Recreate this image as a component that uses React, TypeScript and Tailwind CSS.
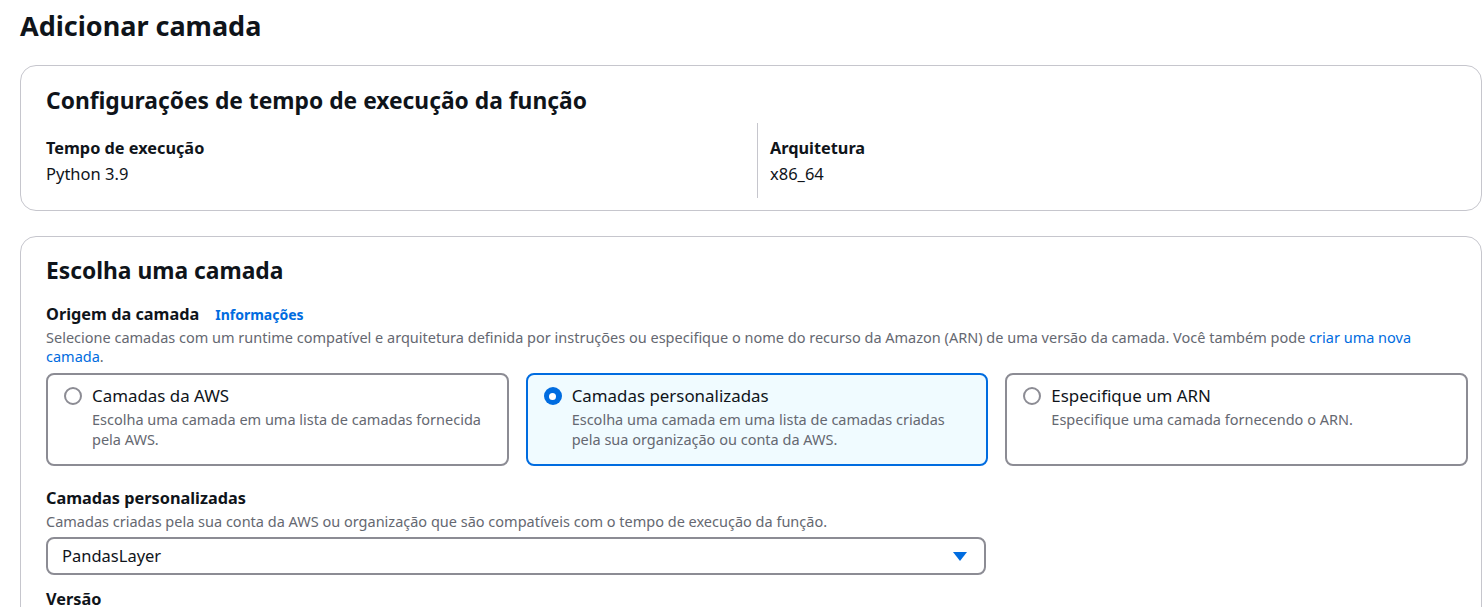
import React from 'react'

const font = { fontFamily: '"Noto Sans", "Open Sans", Arial, sans-serif' }

type Tile = { title: string; desc: string; selected?: boolean }

const TILES: Tile[] = [
  { title: 'Camadas da AWS', desc: 'Escolha uma camada em uma lista de camadas fornecida pela AWS.' },
  { title: 'Camadas personalizadas', desc: 'Escolha uma camada em uma lista de camadas criadas pela sua organização ou conta da AWS.', selected: true },
  { title: 'Especifique um ARN', desc: 'Especifique uma camada fornecendo o ARN.' },
]

function Radio({ checked }: { checked?: boolean }) {
  return checked ? (
    <span className="mt-[2px] flex h-[18px] w-[18px] shrink-0 items-center justify-center rounded-full bg-[#006ce0]">
      <span className="h-[7px] w-[7px] rounded-full bg-white" />
    </span>
  ) : (
    <span className="mt-[2px] h-[18px] w-[18px] shrink-0 rounded-full border-2 border-[#8c8c94] bg-white" />
  )
}

export default function App() {
  return (
    <div className="min-h-screen overflow-hidden bg-white pl-5 text-[#0f141a]" style={font}>
      <h1 className="pt-[8px] text-[27px] font-bold leading-[36px]">Adicionar camada</h1>

      {/* Runtime settings */}
      <section className="mt-[21px] w-[1462px] rounded-[16px] border border-[#c6c6cd] px-[25px] pb-[12px] pt-[21px]">
        <h2 className="text-[22.8px] font-bold leading-[28px]">Configurações de tempo de execução da função</h2>
        <div className="mt-[8px] grid grid-cols-[711px_1fr]">
          <div className="pb-[12px] pt-[13px]">
            <p className="text-[16.3px] font-bold leading-[25px]">Tempo de execução</p>
            <p className="text-[16.5px] leading-[25px]">Python 3.9</p>
          </div>
          <div className="border-l border-[#c6c6cd] pb-[12px] pl-[12px] pt-[13px]">
            <p className="text-[16.3px] font-bold leading-[25px]">Arquitetura</p>
            <p className="text-[16.5px] leading-[25px]">x86_64</p>
          </div>
        </div>
      </section>

      {/* Choose layer */}
      <section className="mt-[25px] w-[1462px] rounded-[16px] border border-[#c6c6cd] px-[25px] pb-10 pt-[20px]">
        <h2 className="text-[22.8px] font-bold leading-[28px]">Escolha uma camada</h2>

        <div className="mt-[17px] flex items-baseline gap-[16px]">
          <span className="text-[16.3px] font-bold leading-[24px]">Origem da camada</span>
          <span className="text-[14px] font-bold text-[#006ce0]">Informações</span>
        </div>
        <p className="mt-[2px] w-[1385px] text-[14.5px] leading-[19px] text-[#656871]">
          Selecione camadas com um runtime compatível e arquitetura definida por instruções ou especifique o nome do recurso da Amazon (ARN) de uma versão da camada. Você também pode{' '}
          <span className="text-[#006ce0]">criar uma nova camada</span>.
        </p>

        <div className="mt-[7px] grid w-[1422px] grid-cols-3 gap-[17px]">
          {TILES.map(t => (
            <div
              key={t.title}
              className={
                t.selected
                  ? 'flex h-[93px] gap-[10px] rounded-[8px] border-2 border-[#006ce0] bg-[#f0fbff] pl-[16px] pr-[20px] pt-[10px]'
                  : 'flex h-[93px] gap-[10px] rounded-[8px] border-2 border-[#8c8c94] bg-white pl-[16px] pr-[20px] pt-[10px]'
              }
            >
              <Radio checked={t.selected} />
              <div>
                <p className="text-[16.9px] leading-[22px]">{t.title}</p>
                <p className="mt-[2px] text-[14.5px] leading-[20px] text-[#656871]">{t.desc}</p>
              </div>
            </div>
          ))}
        </div>

        <p className="mt-[20px] text-[16.3px] font-bold leading-[24px]">Camadas personalizadas</p>
        <p className="mt-[2px] text-[14.5px] leading-[19px] text-[#656871]">
          Camadas criadas pela sua conta da AWS ou organização que são compatíveis com o tempo de execução da função.
        </p>
        <div className="mt-[6px] flex h-[38px] w-[940px] items-center justify-between rounded-[8px] border-2 border-[#8c8c94] bg-white pl-[14px] pr-[17px]">
          <span className="text-[16.5px]">PandasLayer</span>
          <svg width="14" height="9" viewBox="0 0 14 9">
            <path d="M0 0h14L7 9z" fill="#006ce0" />
          </svg>
        </div>

        <p className="mt-[12px] text-[16.3px] font-bold leading-[24px]">Versão</p>
      </section>
    </div>
  )
}
